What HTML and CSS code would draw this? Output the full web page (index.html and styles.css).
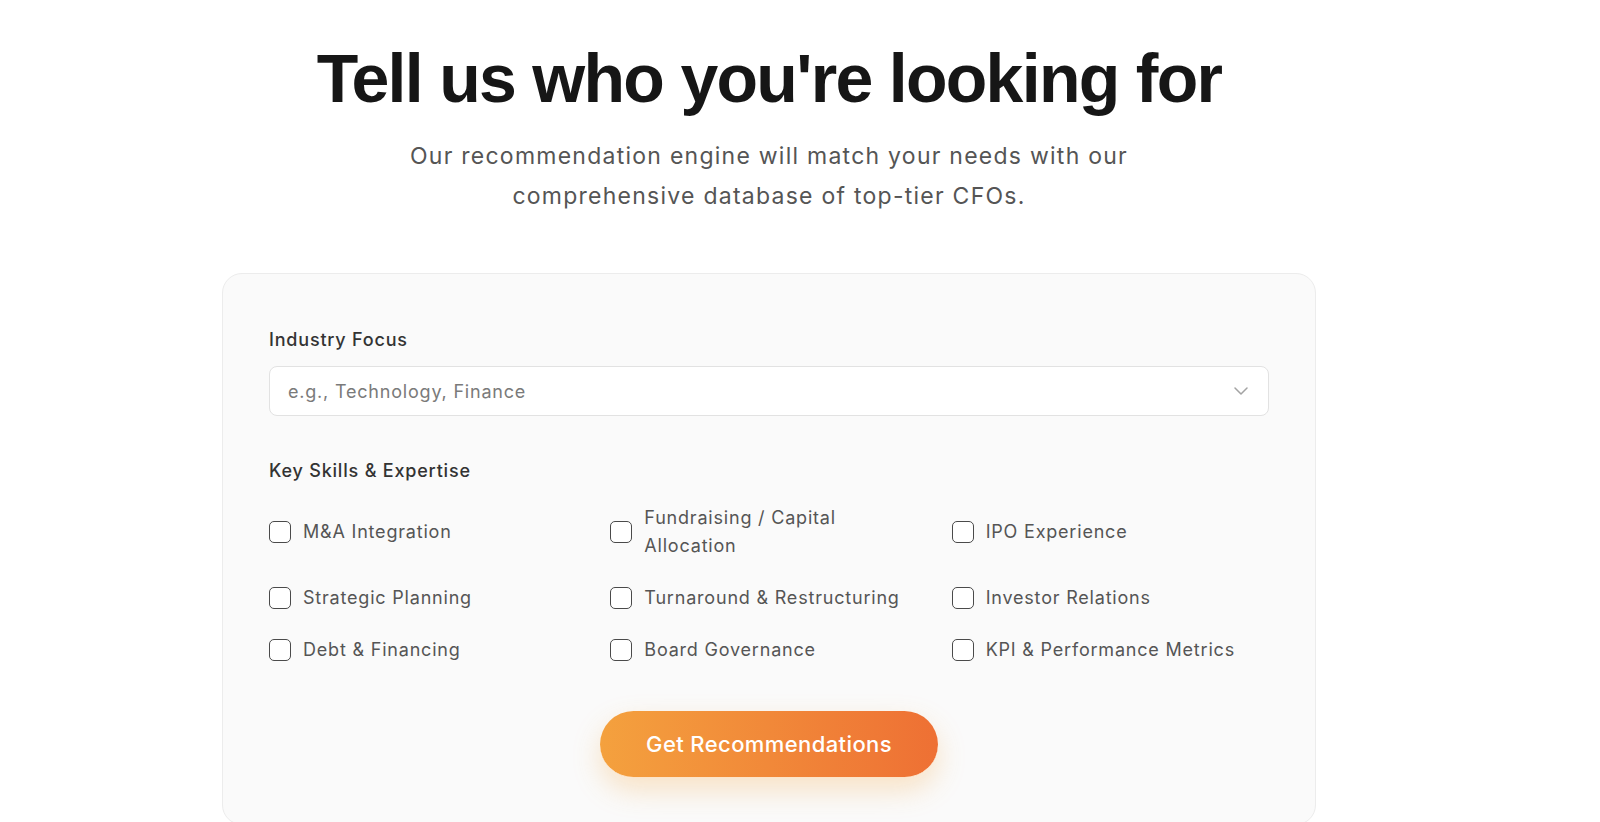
FILE: index.html
```html
<!DOCTYPE html>
<html lang="en">
<head>
    <meta charset="UTF-8">
    <meta name="viewport" content="width=device-width, initial-scale=1.0">
    <title>Find a CFO</title>
    <link rel="stylesheet" href="styles.css">
</head>
<body>
    <main class="page">
        <header class="intro">
            <h1>Tell us who you're looking for</h1>
            <p>Our recommendation engine will match your needs with our comprehensive database of top-tier CFOs.</p>
        </header>

        <form class="card" id="match-form">
            <div class="field">
                <label class="field-label" for="industry">Industry Focus</label>
                <div class="select-wrap">
                    <input type="text" id="industry" name="industry" placeholder="e.g., Technology, Finance">
                    <svg class="chevron" width="14" height="8" viewBox="0 0 14 8" fill="none">
                        <path d="M1 1l6 6 6-6" stroke="#a3a3a3" stroke-width="1.5" stroke-linecap="round" stroke-linejoin="round"/>
                    </svg>
                </div>
            </div>

            <div class="field">
                <span class="field-label">Key Skills &amp; Expertise</span>
                <div class="skills">
                    <label class="skill"><input type="checkbox" name="skills" value="ma"><span>M&amp;A Integration</span></label>
                    <label class="skill"><input type="checkbox" name="skills" value="fundraising"><span>Fundraising / Capital Allocation</span></label>
                    <label class="skill"><input type="checkbox" name="skills" value="ipo"><span>IPO Experience</span></label>
                    <label class="skill"><input type="checkbox" name="skills" value="strategy"><span>Strategic Planning</span></label>
                    <label class="skill"><input type="checkbox" name="skills" value="turnaround"><span>Turnaround &amp; Restructuring</span></label>
                    <label class="skill"><input type="checkbox" name="skills" value="ir"><span>Investor Relations</span></label>
                    <label class="skill"><input type="checkbox" name="skills" value="debt"><span>Debt &amp; Financing</span></label>
                    <label class="skill"><input type="checkbox" name="skills" value="board"><span>Board Governance</span></label>
                    <label class="skill"><input type="checkbox" name="skills" value="kpi"><span>KPI &amp; Performance Metrics</span></label>
                </div>
            </div>

            <div class="actions">
                <button type="submit">Get Recommendations</button>
            </div>
        </form>
    </main>
</body>
</html>
```

FILE: styles.css
```css
body { margin: 0; background: #fff; font-family: Inter, "Noto Sans", sans-serif; color: #333; letter-spacing: 0.05em; }
.page { width: 1538px; padding-top: 44px; }
.intro { text-align: center; }
.intro h1 { font-family: "Liberation Sans", Arial, sans-serif; font-weight: 700; font-size: 68px; line-height: 1; letter-spacing: -0.025em; color: #161616; margin: 0; }
.intro p { max-width: 768px; margin: 24px auto 0; font-size: 23px; line-height: 40px; letter-spacing: 1.25px; color: #555; }

.card { box-sizing: border-box; width: 1094px; margin: 57px auto 0; padding: 54px 46px 46px; background: #fafafa; border: 1px solid #ececec; border-radius: 20px; }
.field { margin-bottom: 43px; }
.field-label { display: block; font-size: 18px; line-height: 24px; font-weight: 500; color: #333; margin-bottom: 14px; }

.select-wrap { position: relative; }
.select-wrap input { box-sizing: border-box; width: 100%; height: 50px; padding: 0 48px 0 18px; font-family: inherit; font-size: 18px; letter-spacing: inherit; color: #333; background: #fff; border: 1px solid #e2e2e2; border-radius: 8px; outline: none; }
.select-wrap input::placeholder { color: #7a7a7a; }
.chevron { position: absolute; right: 21px; top: 21px; }

.skills { display: grid; grid-template-columns: repeat(3, 1fr); column-gap: 24px; row-gap: 24px; margin-top: 21px; }
.skill { display: flex; align-items: center; gap: 12px; font-size: 18px; line-height: 28px; color: #555; cursor: pointer; }
.skill input { appearance: none; flex: none; width: 22px; height: 22px; margin: 0; border: 1.5px solid #4a4a4a; border-radius: 5px; background: #fff; }
.skill input:checked { background: #ef7a35; border-color: #ef7a35; }

.actions { display: flex; justify-content: center; margin-top: 47px; }
button { height: 67px; padding: 0 46px; font-family: inherit; font-size: 22px; font-weight: 500; letter-spacing: 0.4px; color: #fff; background: linear-gradient(90deg, #f4a13e, #ee7034); border: none; border-bottom: 1px solid #fde4c8; border-radius: 34px; box-shadow: 0 12px 28px rgba(246, 166, 60, 0.28); cursor: pointer; }
button:hover { filter: brightness(1.04); }
```
